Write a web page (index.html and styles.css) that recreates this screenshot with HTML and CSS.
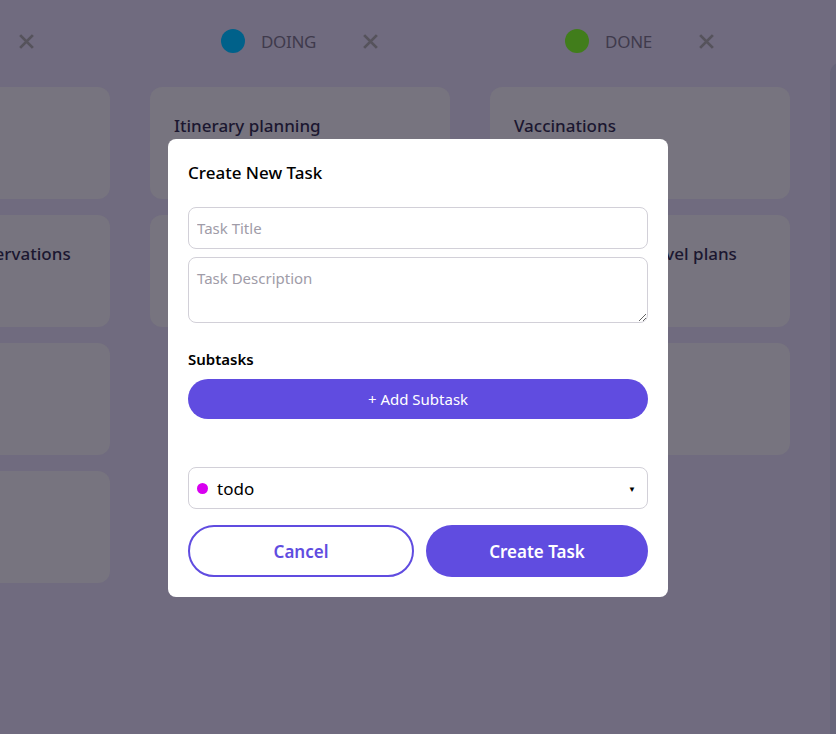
FILE: index.html
```html
<!DOCTYPE html>
<html lang="en">
<head>
<meta charset="utf-8">
<title>Kanban</title>
<link rel="stylesheet" href="styles.css">
</head>
<body>
<div class="board">
  <div class="column">
    <div class="col-head"><span class="dot dot-todo"></span><span class="col-name">TODO</span><svg class="col-x" viewBox="0 0 16 16"><path d="M2 2L14 14M14 2L2 14"/></svg></div>
    <div class="card"></div>
    <div class="card"><span class="card-title">Book restaurant reservations</span></div>
    <div class="card"></div>
    <div class="card"></div>
  </div>
  <div class="column">
    <div class="col-head"><span class="dot dot-doing"></span><span class="col-name">DOING</span><svg class="col-x" viewBox="0 0 16 16"><path d="M2 2L14 14M14 2L2 14"/></svg></div>
    <div class="card"><span class="card-title">Itinerary planning</span></div>
    <div class="card"><span class="card-title">Packing list</span></div>
  </div>
  <div class="column">
    <div class="col-head"><span class="dot dot-done"></span><span class="col-name">DONE</span><svg class="col-x" viewBox="0 0 16 16"><path d="M2 2L14 14M14 2L2 14"/></svg></div>
    <div class="card"><span class="card-title">Vaccinations</span></div>
    <div class="card"><span class="card-title">Reconfirm final travel plans</span></div>
    <div class="card"></div>
  </div>
  <div class="column column-new"></div>
</div>

<div class="modal">
  <h2 class="modal-title">Create New Task</h2>
  <input class="field" type="text" placeholder="Task Title">
  <textarea class="field field-area" placeholder="Task Description"></textarea>
  <div class="label">Subtasks</div>
  <button class="btn-add">+ Add Subtask</button>
  <div class="subtask-list"></div>
  <div class="select">
    <span class="sel-dot"></span><span class="sel-text">todo</span><span class="sel-arrow">▼</span>
  </div>
  <div class="actions">
    <button class="btn btn-cancel">Cancel</button>
    <button class="btn btn-create">Create Task</button>
  </div>
</div>
</body>
</html>
```
FILE: styles.css
```css
* { box-sizing: border-box; }
html, body { margin: 0; padding: 0; }
body {
  width: 836px;
  height: 734px;
  overflow: hidden;
  background: #706b7f;
  font-family: "Noto Sans", "Open Sans", sans-serif;
  position: relative;
}
.board {
  display: flex;
  gap: 40px;
  margin-left: -190px;
  padding-top: 29px;
}
.column {
  width: 300px;
  flex: none;
  display: flex;
  flex-direction: column;
  gap: 16px;
}
.col-head {
  height: 24px;
  display: flex;
  align-items: center;
  justify-content: center;
  margin-bottom: 18px;
}
.dot {
  width: 24px;
  height: 24px;
  border-radius: 50%;
  margin-right: 16px;
}
.dot-todo { background: #6a0077; }
.dot-doing { background: #00618a; }
.dot-done { background: #417d1b; }
.col-name {
  font-size: 17px;
  color: #3f3a4c;
  letter-spacing: -0.3px;
}
.col-x {
  margin-left: 46px;
  width: 17px;
  height: 17px;
  fill: none;
  stroke: #56535c;
  stroke-width: 2.6;
  stroke-linecap: butt;
}
.card {
  height: 112px;
  border-radius: 12px;
  background: #77747f;
  padding: 27px 24px 0;
}
.card-title {
  font-size: 17px;
  font-weight: 500;
  color: #1b1730;
  white-space: nowrap;
}
.column-new {
  margin-top: 33px;
  height: 700px;
  border-radius: 12px;
  background: #67657a;
}

.modal {
  position: absolute;
  left: 168px;
  top: 139px;
  width: 500px;
  background: #fff;
  border-radius: 8px;
  padding: 20px;
  display: flex;
  flex-direction: column;
}
.modal-title {
  margin: 0 0 20px;
  font-size: 17px;
  font-weight: 500;
  line-height: 28px;
  color: #000;
}
.field {
  width: 100%;
  height: 42px;
  border: 1px solid #d2d0d8;
  border-radius: 8px;
  padding: 0 8px;
  font-family: inherit;
  font-size: 15px;
  color: #000;
  outline: none;
}
.field::placeholder { color: #a09ca8; }
.field-area {
  margin-top: 8px;
  height: 66px;
  padding: 8px;
  line-height: 24px;
  resize: vertical;
  display: block;
}
.label {
  margin-top: 26px;
  font-size: 15px;
  font-weight: 600;
  line-height: 20px;
  color: #000;
  margin-bottom: 10px;
}
.btn-add {
  height: 40px;
  border: none;
  border-radius: 20px;
  background: #604ce0;
  color: #fff;
  font-family: inherit;
  font-size: 15px;
}
.subtask-list { height: 48px; }
.select {
  height: 42px;
  border: 1px solid #d2d0d8;
  border-radius: 8px;
  display: flex;
  align-items: center;
  padding: 0 11px 0 8px;
}
.sel-dot {
  width: 11px;
  height: 11px;
  border-radius: 50%;
  background: #d800f0;
  margin-right: 9px;
}
.sel-text {
  flex: 1;
  font-size: 17px;
  color: #000;
}
.sel-arrow {
  font-size: 8px;
  color: #000;
}
.actions {
  margin-top: 16px;
  display: grid;
  grid-template-columns: 226px 222px;
  gap: 12px;
}
.btn {
  height: 52px;
  border-radius: 26px;
  font-family: inherit;
  font-size: 17px;
  font-weight: 600;
}
.btn-cancel {
  background: #fff;
  border: 2px solid #604ce0;
  color: #604ce0;
}
.btn-create {
  background: #604ce0;
  border: none;
  color: #fff;
}
```
